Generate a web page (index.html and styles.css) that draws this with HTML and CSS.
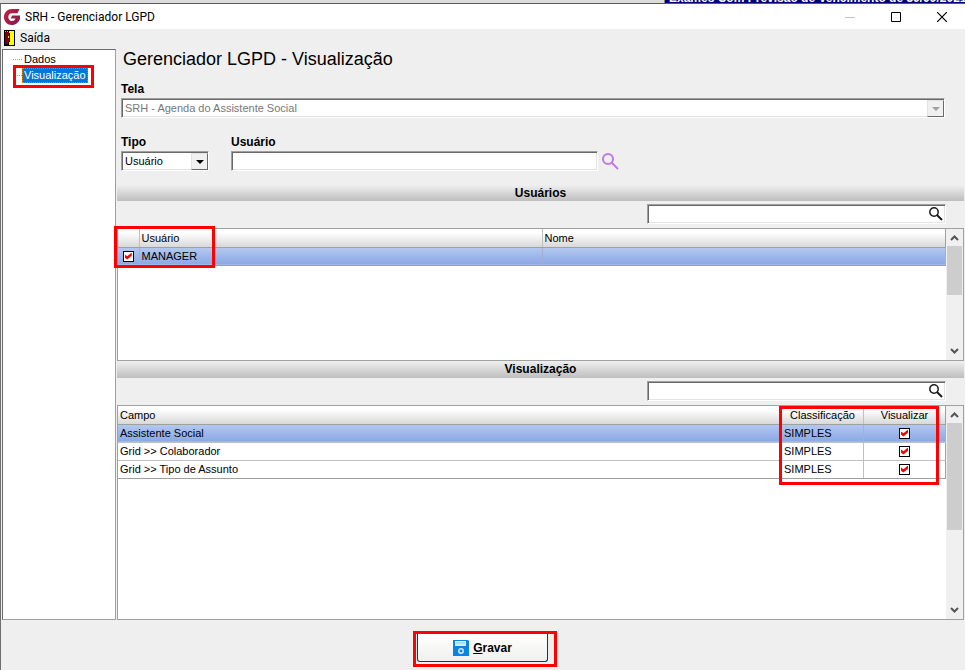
FILE: index.html
```html
<!doctype html>
<html lang="pt-BR">
	<head>
		<meta charset="utf-8">
		<title>SRH - Gerenciador LGPD</title>
		<link rel="stylesheet" href="styles.css">
	</head>
	<body>
		<!-- window behind -->
		<div class="backdrop">
			<div class="backdrop-title">Exames Com Previsão de Vencimento de 30/09/2021</div>
		</div>

		<div class="window">
			<header class="titlebar">
				<svg class="logo" width="16" height="16" viewBox="0 0 16 16">
					<defs><linearGradient id="wine" x1="0" y1="0" x2="1" y2="1"><stop offset="0" stop-color="#c8203c"/><stop offset="1" stop-color="#7c1c50"/></linearGradient></defs>
					<path d="M15.500 0H8C3.500 0 0 3.500 0 8s3.300 8 7.800 8c4 0 7.200-2.500 8.200-6.500V6.500H8L6.800 9.500h4.700c-.5 1.500-1.700 2.500-3.500 2.500C5.700 12 4.300 10.300 4.300 8S5.800 4.300 8 4.300h5.500z" fill="url(#wine)"/>
				</svg>
				<h1>SRH - Gerenciador LGPD</h1>
				<button class="winbtn min" aria-label="Minimizar"><svg width="10" height="10"><path d="M0 5.500H10" stroke="#c4c4c4"/></svg></button>
				<button class="winbtn" aria-label="Maximizar"><svg width="10" height="10"><path d="M.5.5h9v9h-9z" fill="none" stroke="#000"/></svg></button>
				<button class="winbtn" aria-label="Fechar"><svg width="10" height="10"><path d="M0 0L10 10M10 0L0 10" stroke="#000" stroke-width="1.200"/></svg></button>
			</header>

			<nav class="menubar">
				<button class="menu">
					<svg width="11" height="16" shape-rendering="crispEdges">
						<path d="M0 0h11v16H0z" fill="#000"/>
						<path d="M5 1h5v14H5z" fill="#ff0"/>
						<path d="M1 2h4v10H4v2H1z" fill="#800000"/>
						<path d="M1 1h1v1H1zM3 1h1v1H3z" fill="#0ff"/>
						<path d="M5 3h1v9H5z" fill="#000"/>
						<path d="M4 6h1v2H4z" fill="#ff0"/>
					</svg>
					Saída
				</button>
			</nav>

			<main class="content">
				<ul class="tree">
					<li><a href="#">Dados</a></li>
					<li class="marked"><a href="#" class="current">Visualização</a></li>
				</ul>

				<section class="panel">
					<h2>Gerenciador LGPD - Visualização</h2>

					<div class="form">
						<div class="field">
							<label for="tela">Tela</label>
							<div class="combo">
								<select id="tela" disabled><option>SRH - Agenda do Assistente Social</option></select>
								<span class="arrow"></span>
							</div>
						</div>
						<div class="row">
							<div class="field tipo">
								<label for="tipo">Tipo</label>
								<div class="combo">
									<select id="tipo"><option>Usuário</option></select>
									<span class="arrow"></span>
								</div>
							</div>
							<div class="field usuario">
								<label for="usuario">Usuário</label>
								<div class="lookup">
									<input type="text" id="usuario">
									<button aria-label="Pesquisar usuário"><svg width="17" height="17" fill="none" stroke="#be78ec" stroke-width="2"><circle cx="6" cy="6" r="5"/><path d="M9.500 9.500L16 16"/></svg></button>
								</div>
							</div>
						</div>
					</div>

					<h3 class="band">Usuários</h3>
					<div class="search">
						<input type="text" aria-label="Buscar usuários">
						<button aria-label="Buscar"><svg width="14" height="14" fill="none" stroke="#1a1a1a"><circle cx="5" cy="5" r="4.200" stroke-width="1.500"/><path d="M8 8l5 5" stroke-width="2"/></svg></button>
					</div>
					<div class="grid users">
						<div class="rows">
							<table>
								<colgroup><col class="c-check"><col class="c-user"><col></colgroup>
								<thead><tr><th></th><th>Usuário</th><th>Nome</th></tr></thead>
								<tbody>
									<tr class="selected"><td><input type="checkbox" aria-label="MANAGER" checked></td><td>MANAGER</td><td></td></tr>
								</tbody>
							</table>
							<div class="mark mark-user"></div>
						</div>
						<div class="scroll">
							<svg width="9" height="6"><path d="M1 5l3.500-3.500L8 5" fill="none" stroke="#555" stroke-width="2"/></svg>
							<div class="track"><div class="thumb"></div></div>
							<svg width="9" height="6"><path d="M1 1l3.500 3.500L8 1" fill="none" stroke="#555" stroke-width="2"/></svg>
						</div>
					</div>

					<h3 class="band">Visualização</h3>
					<div class="search">
						<input type="text" aria-label="Buscar campos">
						<button aria-label="Buscar"><svg width="14" height="14" fill="none" stroke="#1a1a1a"><circle cx="5" cy="5" r="4.200" stroke-width="1.500"/><path d="M8 8l5 5" stroke-width="2"/></svg></button>
					</div>
					<div class="grid fields">
						<div class="rows">
							<table>
								<colgroup><col><col class="c-class"><col class="c-view"></colgroup>
								<thead><tr><th>Campo</th><th class="center">Classificação</th><th class="center">Visualizar</th></tr></thead>
								<tbody>
									<tr class="selected"><td>Assistente Social</td><td>SIMPLES</td><td class="center"><input type="checkbox" aria-label="Visualizar Assistente Social" checked></td></tr>
									<tr><td>Grid &gt;&gt; Colaborador</td><td>SIMPLES</td><td class="center"><input type="checkbox" aria-label="Visualizar Colaborador" checked></td></tr>
									<tr><td>Grid &gt;&gt; Tipo de Assunto</td><td>SIMPLES</td><td class="center"><input type="checkbox" aria-label="Visualizar Tipo de Assunto" checked></td></tr>
								</tbody>
							</table>
							<div class="mark mark-view"></div>
						</div>
						<div class="scroll">
							<svg width="9" height="6"><path d="M1 5l3.500-3.500L8 5" fill="none" stroke="#555" stroke-width="2"/></svg>
							<div class="track"><div class="thumb"></div></div>
							<svg width="9" height="6"><path d="M1 1l3.500 3.500L8 1" fill="none" stroke="#555" stroke-width="2"/></svg>
						</div>
					</div>
				</section>
			</main>

			<footer class="actions">
				<div class="save-box">
					<button class="save">
						<svg width="16" height="16" viewBox="0 0 16 16">
							<path d="M0 0h15l1 1v15H0z" fill="#0a84e0"/>
							<path d="M2 1h11v5H2z" fill="#d5ecfb"/>
							<path d="M3 3h9" stroke="#8cc8f0"/>
							<circle cx="8" cy="11" r="2.200" fill="#0a84e0" stroke="#d5ecfb" stroke-width="1.500"/>
						</svg>
						<span><u>G</u>ravar</span>
					</button>
				</div>
			</footer>
		</div>
	</body>
</html>
```

FILE: styles.css
```css
*, *::before, *::after { box-sizing: border-box; }
body {
	margin: 0;
	height: 100vh;
	display: flex;
	flex-direction: column;
	overflow: hidden;
	background-color: #efefef;
	color: #000;
	font: 11px/14px "Liberation Sans", Arial, sans-serif;
}
h1, h2, h3, ul { margin: 0; padding: 0; }
button { border: 0; padding: 0; background: none; color: inherit; font: inherit; }
svg { display: block; }

.backdrop {
	display: flex;
	justify-content: flex-end;
	height: 3px;
	overflow: hidden;
	background-color: #dcdcdc;
}
.backdrop-title {
	display: flex;
	align-items: flex-end;
	width: 301px;
	height: 3px;
	padding-left: 4px;
	border-left: 1px solid #808080;
	background-color: #00007b;
	color: #fff;
	font-size: 12px;
	font-weight: bold;
	line-height: 9px;
	white-space: nowrap;
}

.window {
	flex: 1;
	min-height: 0;
	display: flex;
	flex-direction: column;
	border-top: 1px solid #5a5a5a;
	border-left: 1px solid #6e6e6e;
}
.titlebar {
	display: flex;
	align-items: center;
	height: 25px;
	padding-left: 3px;
	background-color: #fff;
}
.titlebar h1 {
	flex: 1;
	margin-left: 5px;
	font: 12px/16px Roboto, sans-serif;
}
.winbtn { width: 46px; height: 24px; display: flex; align-items: center; justify-content: center; }
.menubar { height: 20px; padding: 1px 3px; }
.menu { display: flex; align-items: center; gap: 5px; font: 12px/16px Roboto, sans-serif; }

.content { flex: 1; min-height: 0; display: flex; }
.tree {
	width: 114px;
	margin-left: 1px;
	padding: 1px 0 0 10px;
	list-style: none;
	background-color: #fff;
	border: 1px solid #a0a0a0;
	border-top-color: #696969;
	border-left-color: #696969;
}
.tree li { position: relative; display: flex; align-items: center; height: 16px; }
.tree li::before { content: ""; width: 9px; border-top: 1px dotted #a0a0a0; }
.tree a { padding: 0 2px; line-height: 15px; color: #000; text-decoration: none; }
.tree .current { background-color: #0078d7; color: #fff; outline: 1px dotted #d08020; outline-offset: -1px; }
.marked::after {
	content: "";
	position: absolute;
	left: 0;
	top: -2px;
	width: 81px;
	height: 23px;
	border: 3px solid #f00;
}

.panel { flex: 1; min-width: 0; display: flex; flex-direction: column; margin-right: 1px; padding-left: 1px; }
.panel h2 { padding: 0 6px; font-size: 18px; line-height: 20px; font-weight: normal; }
.form { padding: 13px 19px 14px 4px; }
.field label { display: block; margin-bottom: 1px; font-size: 12px; line-height: 15px; font-weight: bold; }
.row { display: flex; gap: 22px; margin-top: 17px; }
.tipo { width: 88px; }
.usuario { width: 388px; }
.combo { position: relative; }
.combo select, .lookup input, .search {
	height: 20px;
	border: 1px solid #fff;
	border-top-color: #a0a0a0;
	border-left-color: #a0a0a0;
	background-color: #fff;
	box-shadow: inset 1px 1px #696969, inset -1px -1px #e3e3e3;
}
.combo select {
	display: block;
	width: 100%;
	padding: 0 3px;
	appearance: none;
	border-radius: 0;
	color: #000;
	opacity: 1;
	font: inherit;
}
.combo select:disabled { color: #787878; }
.combo .arrow {
	position: absolute;
	top: 2px;
	right: 1px;
	width: 17px;
	height: 17px;
	display: flex;
	align-items: center;
	justify-content: center;
	border: 1px solid #e3e3e3;
	border-right-color: #696969;
	border-bottom-color: #696969;
	background-color: #f0f0f0;
	pointer-events: none;
}
.arrow::before { content: ""; border: 4px solid transparent; border-top-color: #000; border-bottom: 0; }
select:disabled + .arrow::before { border-top-color: #a0a0a0; }
.lookup { display: flex; align-items: center; gap: 4px; }
.lookup input { flex: 1; min-width: 0; padding: 0 3px; font: inherit; }

.band {
	height: 16px;
	background: linear-gradient(#efefef, #bebebe);
	font-size: 12px;
	line-height: 16px;
	text-align: center;
}
.search {
	display: flex;
	align-items: center;
	width: 299px;
	margin: 3px 18px 4px auto;
	padding: 1px 2px 1px 1px;
}
.search input { flex: 1; min-width: 0; height: 100%; border: 0; padding: 0 2px; background: none; font: inherit; }

.grid { display: flex; border: 1px solid #a0a0a0; background-color: #fff; }
.users { height: 133px; }
.users + .band { height: 17px; }
.fields { flex: 1; min-height: 0; }
.rows { position: relative; flex: 1; min-width: 0; }
.grid table { width: 100%; table-layout: fixed; border-collapse: collapse; }
.c-check { width: 21px; }
.c-user { width: 403px; }
.c-class { width: 82px; }
.c-view { width: 82px; }
.grid th, .grid td {
	height: 18px;
	padding: 0 2px;
	border: 1px solid #c0c0c0;
	border-left: 0;
	text-align: left;
	font-weight: normal;
	line-height: 16px;
}
.grid th { border-top: 0; border-bottom-color: #a0a0a0; background: linear-gradient(#fff 20%, #d8d8d8); }
.grid th:last-child, .grid td:last-child { border-right-color: #a0a0a0; }
.grid tr:last-child td { border-bottom-color: #a0a0a0; }
.grid .selected td { border-right-color: #a0b0d8; background: linear-gradient(#b4c8f0, #8aa8e4); }
.grid .center { text-align: center; }
.grid input {
	appearance: none;
	display: block;
	width: 11px;
	height: 11px;
	margin: 0 auto;
	border: 1px solid #000;
	background-color: #fff;
}
.users td:first-child { padding: 0; }
.grid input:checked::before {
	content: "";
	display: block;
	width: 7px;
	height: 7px;
	margin: 1px;
	background-color: #f00;
	clip-path: polygon(0 30%, 35% 55%, 100% 0, 100% 45%, 35% 100%, 0 75%);
}

.scroll { width: 17px; display: flex; flex-direction: column; align-items: center; padding: 6px 1px; background-color: #f0f0f0; }
.track { flex: 1; width: 15px; margin: 5px 0; }
.thumb { background-color: #cdcdcd; }
.users .thumb { height: 49px; }
.fields .thumb { height: 107px; }

.mark { position: absolute; border: 3px solid #f00; pointer-events: none; }
.mark-user { left: -4px; top: -3px; width: 101px; height: 42px; }
.mark-view { right: 7px; top: 0; width: 160px; height: 79px; }

.actions { display: flex; justify-content: center; height: 50px; padding-top: 11px; }
.save-box { width: 144px; height: 36px; border: 3px solid #f00; margin-left: 4px; }
.save {
	display: flex;
	align-items: center;
	justify-content: center;
	gap: 4px;
	width: 131px;
	height: 28px;
	margin-left: 1px;
	border: 1px solid #003c74;
	border-top: 0;
	border-radius: 0 0 3px 3px;
	background: linear-gradient(#fff, #f0f0ee);
	font-weight: bold;
	font-size: 12px;
}
```
